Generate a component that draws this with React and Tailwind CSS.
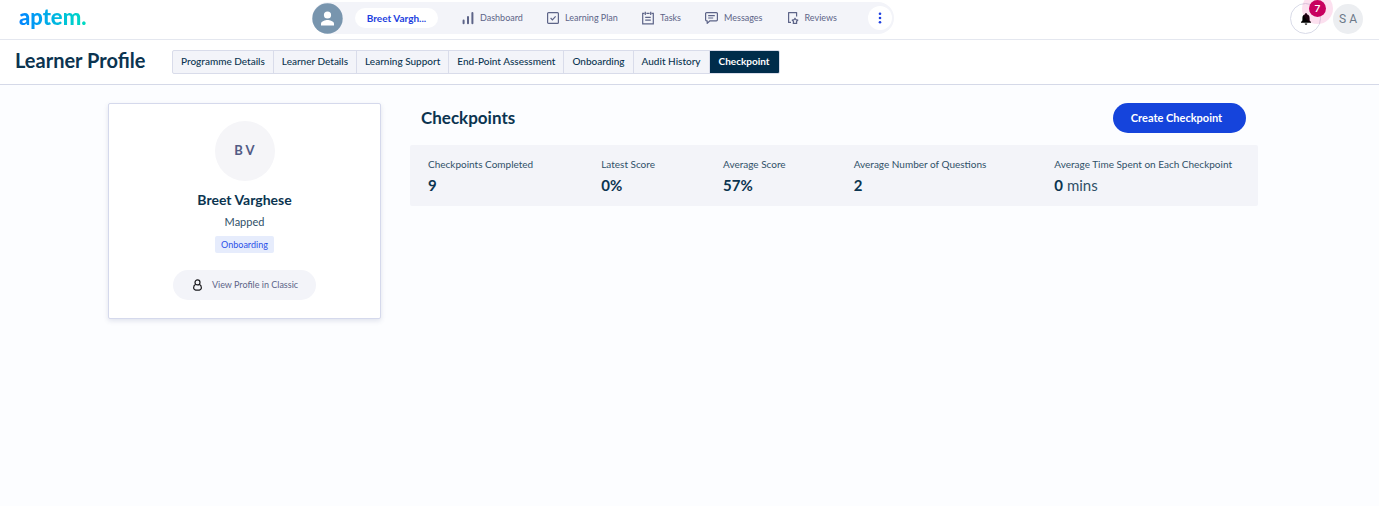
const tabs = [
  "Programme Details",
  "Learner Details",
  "Learning Support",
  "End-Point Assessment",
  "Onboarding",
  "Audit History",
  "Checkpoint",
];

const stats = [
  { label: "Checkpoints Completed", value: "9" },
  { label: "Latest Score", value: "0%" },
  { label: "Average Score", value: "57%" },
  { label: "Average Number of Questions", value: "2" },
  { label: "Average Time Spent on Each Checkpoint", value: "0", unit: "mins" },
];

const stroke = { fill: "none", stroke: "currentColor", strokeWidth: 1.2 };

function DashboardIcon() {
  return (
    <svg width="12" height="14" viewBox="0 0 12 14" {...stroke} strokeWidth="2" strokeLinecap="round">
      <path d="M1.6 9.600v2.600M6 6v6.200M10.400 2v10.200" />
    </svg>
  );
}

function PlanIcon() {
  return (
    <svg width="12" height="14" viewBox="0 0 12 14" {...stroke}>
      <rect x="0.6" y="1.6" width="10.8" height="10.8" rx="1" />
      <path d="M3.6 7l1.8 1.8 3.2-3.4" />
    </svg>
  );
}

function TasksIcon() {
  return (
    <svg width="12" height="14" viewBox="0 0 12 14" {...stroke}>
      <path d="M2.4 2.4H.7v10.400h10.600V2.400H9.600M4.400 2.400h3.200M3.300 .8v3.200M8.700 .8v3.200M3.200 6.400h5.600M3.200 9.200h5.600" />
    </svg>
  );
}

function MessagesIcon() {
  return (
    <svg width="13" height="14" viewBox="0 0 13 14" {...stroke} strokeLinejoin="round">
      <path d="M1.6 1.6h9.8a1 1 0 0 1 1 1v6.2a1 1 0 0 1-1 1H5L2.2 12.4V9.8h-.6a1 1 0 0 1-1-1V2.6a1 1 0 0 1 1-1z" />
      <path d="M3.2 4.6h6.6M3.2 7h5" />
    </svg>
  );
}

function ReviewsIcon() {
  return (
    <svg width="12" height="14" viewBox="0 0 12 14" {...stroke} strokeLinejoin="round">
      <path d="M4 11.400H1.600V1.600h8v4" />
      <path d="M8 7.200l.9 1.500 1.900.4-1.300 1.400.2 1.900H6.300l.2-1.900-1.300-1.400 1.900-.4z" />
    </svg>
  );
}

const navItems = [
  { label: "Dashboard", Icon: DashboardIcon },
  { label: "Learning Plan", Icon: PlanIcon },
  { label: "Tasks", Icon: TasksIcon },
  { label: "Messages", Icon: MessagesIcon },
  { label: "Reviews", Icon: ReviewsIcon },
];

function TopBar() {
  return (
    <header className="flex h-10 items-start border-b border-[#e4e7ef] bg-white pr-4 pl-[19px]">
      <div className="w-[293px] shrink-0 pt-[3px]">
        <a
          href="#"
          className="inline-block bg-gradient-to-r from-[#0a84ff] to-[#00dcc0] bg-clip-text text-[22px] leading-7 font-black text-transparent"
        >
          aptem.
        </a>
      </div>

      <nav className="mt-0.5 flex h-8 shrink-0 items-center rounded-full bg-[#f3f4f9] pr-0.5 text-[9px] text-[#5d6488]">
        <svg width="31" height="31" viewBox="0 0 31 31" className="text-[#7895ae]">
          <circle cx="15.5" cy="15.5" r="15.2" fill="currentColor" />
          <circle cx="15.5" cy="12" r="3.6" fill="#fff" />
          <path d="M9 22.4v-1.6c0-2.6 4.4-3.7 6.5-3.7s6.500 1.100 6.500 3.700v1.600z" fill="#fff" />
        </svg>
        <a href="#" className="mr-6 ml-3 flex h-5 w-[83px] items-center justify-center rounded-full bg-white text-[10px] font-bold text-[#1d3fe0]">
          Breet Vargh...
        </a>
        <ul className="flex items-center gap-6">
          {navItems.map(({ label, Icon }) => (
            <li key={label}>
              <a href="#" className="flex items-center gap-1.5">
                <Icon />
                {label}
              </a>
            </li>
          ))}
        </ul>
        <button aria-label="More" className="ml-[31px] flex size-6 items-center justify-center rounded-full bg-white text-[#1d3fe0]">
          <svg width="4" height="12" viewBox="0 0 4 12" fill="currentColor">
            <circle cx="2" cy="1.800" r="1.300" />
            <circle cx="2" cy="6" r="1.300" />
            <circle cx="2" cy="10.200" r="1.300" />
          </svg>
        </button>
      </nav>

      <div className="mt-[3px] ml-auto flex items-center gap-3">
        <button aria-label="Notifications" className="relative flex size-[31px] items-center justify-center rounded-full border border-[#d9dbe8] text-black">
          <svg width="10" height="12" viewBox="0 0 10 12" fill="currentColor">
            <path d="M5 0a.9.9 0 0 1 .9.9v.4C7.600 1.700 8.600 3 8.600 5v2.600L10 9v.8H0V9l1.400-1.400V5c0-2 1-3.300 2.700-3.700V.9A.9.900 0 0 1 5 0zM3.700 10.400h2.600a1.300 1.300 0 0 1-2.600 0z" />
          </svg>
          <span className="absolute -top-[11px] -right-[13px] flex size-[31px] items-center justify-center rounded-full bg-[#e6007a]/12">
            <span className="flex size-[17px] items-center justify-center rounded-full bg-[#c8005f] text-[10px] font-bold text-white">
              7
            </span>
          </span>
        </button>
        <button className="flex size-[30px] items-center justify-center rounded-full bg-[#eceef1] font-['Roboto',sans-serif] text-xs text-[#6b7888]">
          S A
        </button>
      </div>
    </header>
  );
}

function SubHeader() {
  return (
    <div className="flex h-[45px] items-center border-b border-[#d5d9e8] bg-white pl-[15px]">
      <h1 className="w-[157px] shrink-0 pb-1 text-[20px] leading-6 font-bold">Learner Profile</h1>
      <div className="flex h-6 overflow-hidden rounded-xs border border-[#d9dcea] bg-[#f3f4f9] text-[10px]">
        {tabs.map((tab) => (
          <button
            key={tab}
            className={
              tab === "Checkpoint"
                ? "bg-[#002c4b] px-[9px] pb-0.5 font-bold text-white"
                : "border-r border-[#d9dcea] px-2 pb-0.5 font-medium"
            }
          >
            {tab}
          </button>
        ))}
      </div>
    </div>
  );
}

function ProfileCard() {
  return (
    <section className="flex w-[273px] shrink-0 flex-col items-center self-start rounded-xs border border-[#d5d9ec] bg-white pt-[17px] pb-[18px] shadow-[0_2px_5px_rgba(60,70,130,0.14)]">
      <div className="flex size-[60px] items-center justify-center rounded-full bg-[#f5f5f8] text-[13px] font-bold text-[#525b85]">
        B V
      </div>
      <h2 className="mt-[9px] text-[14px] leading-5 font-bold">Breet Varghese</h2>
      <p className="mt-1 text-[11px] leading-4 text-[#2f5068]">Mapped</p>
      <span className="mt-1.5 rounded-xs bg-[#e6ecfc] px-1.5 text-[9px] leading-[17px] text-[#2b50e8]">
        Onboarding
      </span>
      <a
        href="#"
        className="mt-[17px] flex h-[30px] items-center gap-2 rounded-full bg-[#f3f4f9] px-[18px] text-[9px] text-[#5d6488]"
      >
        <svg width="13" height="12" viewBox="0 0 13 12" fill="none" stroke="#1b1b1f" strokeWidth="1.200">
          <circle cx="6.500" cy="3.400" r="2.500" />
          <path d="M4.700 5.300C3.300 6 2.600 7.300 2.600 8.700c0 1.700 1.400 2.500 3.900 2.500s3.900-.8 3.900-2.500c0-1.400-.7-2.700-2.100-3.400" />
        </svg>
        View Profile in Classic
      </a>
    </section>
  );
}

function Checkpoints() {
  return (
    <section className="min-w-0 flex-1">
      <div className="flex items-center justify-between pr-3 pl-[11px]">
        <h2 className="text-[17px] leading-6 font-bold">Checkpoints</h2>
        <button className="h-[30px] w-[133px] rounded-full bg-[#1544dc] pr-1.5 text-[11px] font-bold text-white">
          Create Checkpoint
        </button>
      </div>
      <dl className="mt-3 flex justify-between rounded-xs bg-[#f3f4f9] pt-2.5 pr-[26px] pb-[9px] pl-[18px]">
        {stats.map((stat) => (
          <div key={stat.label}>
            <dt className="text-[10px] leading-[18px] text-[#2f5068]">{stat.label}</dt>
            <dd className="text-[15px] leading-6">
              <strong className="font-bold">{stat.value}</strong>
              {stat.unit && <span className="text-[#2f5068]"> {stat.unit}</span>}
            </dd>
          </div>
        ))}
      </dl>
    </section>
  );
}

export default function App() {
  return (
    <div className="min-h-screen bg-[#fcfdff] font-['Lato',sans-serif] text-[#0b3450]">
      <TopBar />
      <SubHeader />
      <main className="flex gap-[29px] pt-[18px] pr-[121px] pl-[108px]">
        <ProfileCard />
        <Checkpoints />
      </main>
    </div>
  );
}
